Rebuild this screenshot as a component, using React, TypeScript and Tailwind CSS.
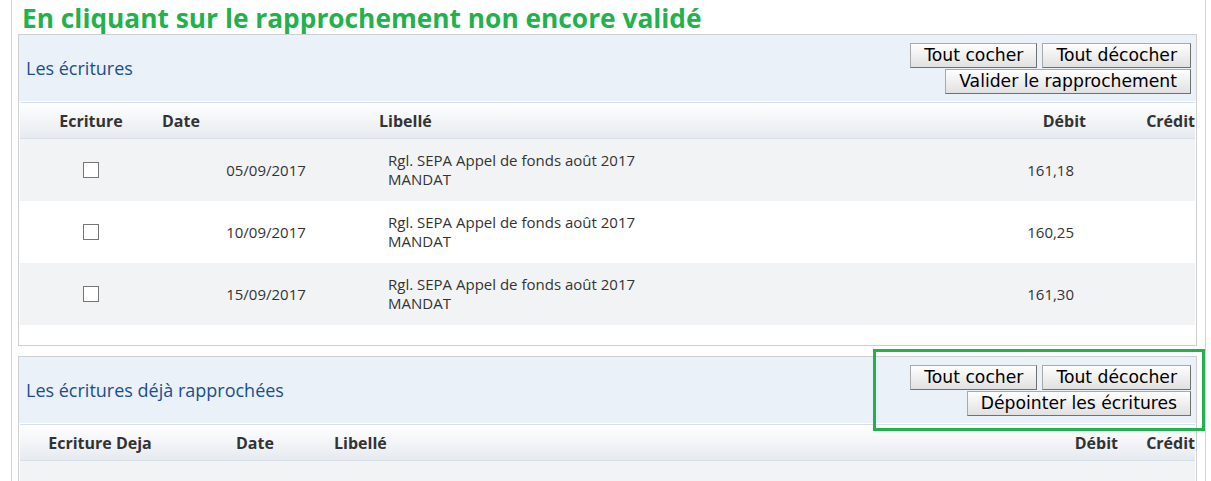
const rows = [
  { date: "05/09/2017", debit: "161,18" },
  { date: "10/09/2017", debit: "160,25" },
  { date: "15/09/2017", debit: "161,30" },
];

function Btn({ children }: { children: React.ReactNode }) {
  return (
    <button className="h-[25px] px-[13px] border border-[#a9a9a9] border-r-[#707070] border-b-[#707070] bg-linear-to-b from-[#fefefe] to-[#e1e1e1] font-['DejaVu_Sans',sans-serif] text-[17.2px] leading-[22px] text-black whitespace-nowrap">
      {children}
    </button>
  );
}

function PanelHeader({ title, action }: { title: string; action: string }) {
  return (
    <div className="h-[66px] bg-[#eaf1f8] flex items-center justify-between pl-[7px] pr-[5px]">
      <h2 className="text-[18px] text-[#1a4f8e]">{title}</h2>
      <div className="flex flex-col items-end gap-px">
        <div className="flex gap-[5px]">
          <Btn>Tout cocher</Btn>
          <Btn>Tout décocher</Btn>
        </div>
        <Btn>{action}</Btn>
      </div>
    </div>
  );
}

export default function App() {
  return (
    <div className="relative w-[1211px] h-[481px] overflow-hidden bg-white font-['Open_Sans',sans-serif] text-[#333]">
      <div className="ml-[11px] w-[1195px] h-full border-x border-[#d3d3d3] pl-[6px] pr-[8px]">
        {/* Titre annotation */}
        <h1 className="ml-[4px] h-[34px] pt-[2px] leading-[32px] text-[26.3px] font-bold text-[#22b14c] whitespace-nowrap">
          En cliquant sur le rapprochement non encore validé
        </h1>

        {/* Panneau 1 */}
        <section className="border border-[#cfcfcf]">
          <PanelHeader title="Les écritures" action="Valider le rapprochement" />
          <div className="mx-px mt-px">
            <div className="h-[37px] flex items-center border-y border-[#d5e0ea] bg-linear-to-b from-white to-[#e6eaef] text-[16px] font-bold">
              <div className="w-[142px] text-center">Ecriture</div>
              <div className="w-[208px]">Date</div>
              <div className="flex-1 pl-[9px]">Libellé</div>
              <div className="w-[150px] text-right">Débit</div>
              <div className="w-[109px] text-right">Crédit</div>
            </div>
            {rows.map((r, i) => (
              <div
                key={r.date}
                className={`h-[62px] flex items-center text-[15px] ${i % 2 === 0 ? "bg-[#f2f3f5]" : "bg-white"}`}
              >
                <div className="w-[142px] flex justify-center">
                  <div className="w-4 h-4 border-[1.5px] border-[#767676] bg-white" />
                </div>
                <div className="w-[208px] text-center">{r.date}</div>
                <div className="flex-1 pl-[18px] leading-[19px]">
                  <div>Rgl. SEPA Appel de fonds août 2017</div>
                  <div>MANDAT</div>
                </div>
                <div className="w-[150px] text-right pr-[12px]">{r.debit}</div>
                <div className="w-[109px]" />
              </div>
            ))}
            <div className="h-[20px]" />
          </div>
        </section>

        {/* Panneau 2 */}
        <section className="mt-[10px] border border-[#cfcfcf] h-[200px]">
          <PanelHeader title="Les écritures déjà rapprochées" action="Dépointer les écritures" />
          <div className="mx-px mt-px">
            <div className="h-[37px] flex items-center border-y border-[#d5e0ea] bg-linear-to-b from-white to-[#e6eaef] text-[16px] font-bold">
              <div className="w-[160px] text-center">Ecriture Deja</div>
              <div className="w-[154px] pl-[56px]">Date</div>
              <div className="flex-1">Libellé</div>
              <div className="w-[150px] text-right">Débit</div>
              <div className="w-[77px] text-right">Crédit</div>
            </div>
            <div className="h-[62px] bg-[#f2f3f5]" />
          </div>
        </section>
      </div>

      {/* Encadré vert */}
      <div className="absolute left-[873px] top-[349px] w-[332px] h-[82px] border-[3px] border-[#22b14c]" />
    </div>
  );
}
